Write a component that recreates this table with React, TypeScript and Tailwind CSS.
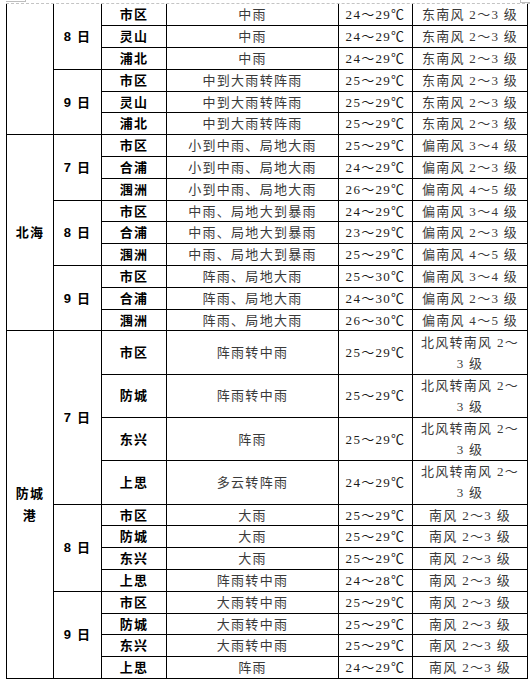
type Row = { place: string; weather: string; temp: string; wind: string };
type Day = { day: string; tall?: boolean; rows: Row[] };
type Group = { city: string; days: Day[] };

const r = (place: string, weather: string, temp: string, wind: string): Row => ({ place, weather, temp, wind });

const groups: Group[] = [
  {
    city: "",
    days: [
      {
        day: "8 日",
        rows: [
          r("市区", "中雨", "24～29℃", "东南风 2～3 级"),
          r("灵山", "中雨", "24～29℃", "东南风 2～3 级"),
          r("浦北", "中雨", "24～29℃", "东南风 2～3 级"),
        ],
      },
      {
        day: "9 日",
        rows: [
          r("市区", "中到大雨转阵雨", "25～29℃", "东南风 2～3 级"),
          r("灵山", "中到大雨转阵雨", "25～29℃", "东南风 2～3 级"),
          r("浦北", "中到大雨转阵雨", "25～29℃", "东南风 2～3 级"),
        ],
      },
    ],
  },
  {
    city: "北海",
    days: [
      {
        day: "7 日",
        rows: [
          r("市区", "小到中雨、局地大雨", "25～29℃", "偏南风 3～4 级"),
          r("合浦", "小到中雨、局地大雨", "24～29℃", "偏南风 2～3 级"),
          r("涠洲", "小到中雨、局地大雨", "26～29℃", "偏南风 4～5 级"),
        ],
      },
      {
        day: "8 日",
        rows: [
          r("市区", "中雨、局地大到暴雨", "24～29℃", "偏南风 3～4 级"),
          r("合浦", "中雨、局地大到暴雨", "23～29℃", "偏南风 2～3 级"),
          r("涠洲", "中雨、局地大到暴雨", "25～29℃", "偏南风 4～5 级"),
        ],
      },
      {
        day: "9 日",
        rows: [
          r("市区", "阵雨、局地大雨", "25～30℃", "偏南风 3～4 级"),
          r("合浦", "阵雨、局地大雨", "24～30℃", "偏南风 2～3 级"),
          r("涠洲", "阵雨、局地大雨", "26～30℃", "偏南风 4～5 级"),
        ],
      },
    ],
  },
  {
    city: "防城港",
    days: [
      {
        day: "7 日",
        tall: true,
        rows: [
          r("市区", "阵雨转中雨", "25～29℃", "北风转南风 2～|3 级"),
          r("防城", "阵雨转中雨", "25～29℃", "北风转南风 2～|3 级"),
          r("东兴", "阵雨", "25～29℃", "北风转南风 2～|3 级"),
          r("上思", "多云转阵雨", "24～29℃", "北风转南风 2～|3 级"),
        ],
      },
      {
        day: "8 日",
        rows: [
          r("市区", "大雨", "25～29℃", "南风 2～3 级"),
          r("防城", "大雨", "25～29℃", "南风 2～3 级"),
          r("东兴", "大雨", "25～29℃", "南风 2～3 级"),
          r("上思", "阵雨转中雨", "24～28℃", "南风 2～3 级"),
        ],
      },
      {
        day: "9 日",
        rows: [
          r("市区", "大雨转中雨", "25～29℃", "南风 2～3 级"),
          r("防城", "大雨转中雨", "25～29℃", "南风 2～3 级"),
          r("东兴", "大雨转中雨", "25～29℃", "南风 2～3 级"),
          r("上思", "阵雨", "24～29℃", "南风 2～3 级"),
        ],
      },
    ],
  },
];

const cell = "border border-black p-0 text-center align-middle";
const bold = "font-['Liberation_Sans','Noto_Sans_CJK_SC',sans-serif] font-bold text-[13px] leading-[19px] tracking-[1.3px] text-black";
const plain = "font-['Liberation_Serif','Noto_Sans_CJK_SC',serif] text-[13px] leading-[19px] tracking-[1.3px]";

export default function App() {
  let first = true;
  const rows: React.ReactNode[] = [];

  groups.forEach((g, gi) => {
    const total = g.days.reduce((n, d) => n + d.rows.length, 0);
    g.days.forEach((d, di) => {
      d.rows.forEach((row, ri) => {
        const top = first ? " border-t-0" : "";
        first = false;
        const [w1, w2] = row.wind.split("|");
        rows.push(
          <tr key={`${gi}-${di}-${ri}`} className={d.tall ? "h-[43.3px]" : "h-[21.8px]"}>
            {di === 0 && ri === 0 && (
              <td rowSpan={total} className={cell + top + " " + bold + " leading-[22px]"}>
                {g.city === "防城港" ? (
                  <>
                    防城
                    <br />港
                  </>
                ) : (
                  g.city
                )}
              </td>
            )}
            {ri === 0 && (
              <td rowSpan={d.rows.length} className={cell + top + " " + bold}>
                {d.day}
              </td>
            )}
            <td className={cell + top + " " + bold}>{row.place}</td>
            <td className={cell + top + " " + plain + " text-[#3a3a3a]"}>{row.weather}</td>
            <td className={cell + top + " " + plain + " text-[#1a1a1a]"}>{row.temp}</td>
            <td className={cell + top + " " + plain + " text-[#3a3a3a]" + (w2 ? " leading-[21px]" : "")}>
              {w2 ? (
                <>
                  {w1}
                  <br />
                  {w2}
                </>
              ) : (
                w1
              )}
            </td>
          </tr>
        );
      });
    });
  });

  return (
    <div className="relative h-[681px] w-[530px] overflow-hidden bg-white">
      {/* page corner marks */}
      <div className="absolute left-[6px] top-[1px] h-px w-[19px] bg-[#bdbdbd]" />
      <div className="absolute left-[25px] top-0 h-[2px] w-px bg-[#bdbdbd]" />
      <div className="absolute left-[520px] top-0 h-[3px] w-px bg-[#bdbdbd]" />
      <div className="absolute left-[520px] top-[2px] h-px w-[10px] bg-[#bdbdbd]" />

      <div className="ml-[6px] h-[4px] w-[524px] border-b border-dashed border-[#c4c4c4]" />
      <table className="ml-[6px] w-[521px] table-fixed border-collapse">
        <colgroup>
          <col className="w-[47px]" />
          <col className="w-[48px]" />
          <col className="w-[65px]" />
          <col className="w-[172px]" />
          <col className="w-[74px]" />
          <col className="w-[115px]" />
        </colgroup>
        <tbody>{rows}</tbody>
      </table>
    </div>
  );
}
